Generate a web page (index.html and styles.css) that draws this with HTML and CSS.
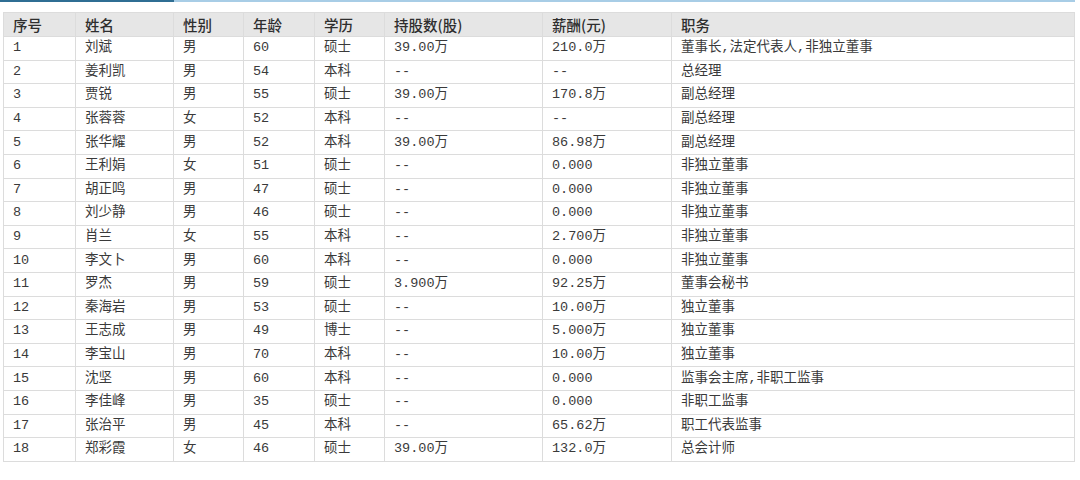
FILE: index.html
```html
<!DOCTYPE html>
<html lang="zh">
<head>
<meta charset="utf-8">
<link rel="stylesheet" href="styles.css">
</head>
<body>
<div class="page">
  <div class="topbar"><div class="topbar-active"></div><div class="topbar-rest"></div></div>
  <table class="grid">
    <colgroup>
      <col style="width:72px"><col style="width:98px"><col style="width:70px"><col style="width:71px">
      <col style="width:70px"><col style="width:158px"><col style="width:129px"><col>
    </colgroup>
    <thead>
      <tr><th>序号</th><th>姓名</th><th>性别</th><th>年龄</th><th>学历</th><th>持股数(股)</th><th>薪酬(元)</th><th>职务</th></tr>
    </thead>
    <tbody>
      <tr><td>1</td><td>刘斌</td><td>男</td><td>60</td><td>硕士</td><td>39.00万</td><td>210.0万</td><td>董事长,法定代表人,非独立董事</td></tr>
      <tr><td>2</td><td>姜利凯</td><td>男</td><td>54</td><td>本科</td><td>--</td><td>--</td><td>总经理</td></tr>
      <tr><td>3</td><td>贾锐</td><td>男</td><td>55</td><td>硕士</td><td>39.00万</td><td>170.8万</td><td>副总经理</td></tr>
      <tr><td>4</td><td>张蓉蓉</td><td>女</td><td>52</td><td>本科</td><td>--</td><td>--</td><td>副总经理</td></tr>
      <tr><td>5</td><td>张华耀</td><td>男</td><td>52</td><td>本科</td><td>39.00万</td><td>86.98万</td><td>副总经理</td></tr>
      <tr><td>6</td><td>王利娟</td><td>女</td><td>51</td><td>硕士</td><td>--</td><td>0.000</td><td>非独立董事</td></tr>
      <tr><td>7</td><td>胡正鸣</td><td>男</td><td>47</td><td>硕士</td><td>--</td><td>0.000</td><td>非独立董事</td></tr>
      <tr><td>8</td><td>刘少静</td><td>男</td><td>46</td><td>硕士</td><td>--</td><td>0.000</td><td>非独立董事</td></tr>
      <tr><td>9</td><td>肖兰</td><td>女</td><td>55</td><td>本科</td><td>--</td><td>2.700万</td><td>非独立董事</td></tr>
      <tr><td>10</td><td>李文卜</td><td>男</td><td>60</td><td>本科</td><td>--</td><td>0.000</td><td>非独立董事</td></tr>
      <tr><td>11</td><td>罗杰</td><td>男</td><td>59</td><td>硕士</td><td>3.900万</td><td>92.25万</td><td>董事会秘书</td></tr>
      <tr><td>12</td><td>秦海岩</td><td>男</td><td>53</td><td>硕士</td><td>--</td><td>10.00万</td><td>独立董事</td></tr>
      <tr><td>13</td><td>王志成</td><td>男</td><td>49</td><td>博士</td><td>--</td><td>5.000万</td><td>独立董事</td></tr>
      <tr><td>14</td><td>李宝山</td><td>男</td><td>70</td><td>本科</td><td>--</td><td>10.00万</td><td>独立董事</td></tr>
      <tr><td>15</td><td>沈坚</td><td>男</td><td>60</td><td>本科</td><td>--</td><td>0.000</td><td>监事会主席,非职工监事</td></tr>
      <tr><td>16</td><td>李佳峰</td><td>男</td><td>35</td><td>硕士</td><td>--</td><td>0.000</td><td>非职工监事</td></tr>
      <tr><td>17</td><td>张治平</td><td>男</td><td>45</td><td>本科</td><td>--</td><td>65.62万</td><td>职工代表监事</td></tr>
      <tr><td>18</td><td>郑彩霞</td><td>女</td><td>46</td><td>硕士</td><td>39.00万</td><td>132.0万</td><td>总会计师</td></tr>
    </tbody>
  </table>
</div>
</body>
</html>
```
FILE: styles.css
```css
html, body {
  margin: 0;
  padding: 0;
  background: #ffffff;
}
.page {
  width: 1075px;
}
.topbar {
  display: flex;
  height: 2px;
}
.topbar-active {
  width: 174px;
  background: #2f6e93;
}
.topbar-rest {
  flex: 1;
  background: #a8cde6;
}
.grid {
  margin: 10px 0 0 3px;
  width: 1072px;
  table-layout: fixed;
  border-collapse: collapse;
  font-family: "Liberation Mono", "Noto Sans CJK SC", monospace;
  font-size: 13.5px;
  color: #3a3a3a;
}
.grid th, .grid td {
  border: 1px solid #dcdcdc;
  padding: 0 0 0 9px;
  text-align: left;
  white-space: nowrap;
  overflow: hidden;
  line-height: 20px;
}
.grid th {
  height: 23px;
  background: #e6e6e6;
  font-family: "Noto Sans CJK SC", sans-serif;
  font-weight: 500;
  font-size: 14.5px;
  color: #2e2e2e;
}
.grid td {
  height: 22.6px;
}
```
